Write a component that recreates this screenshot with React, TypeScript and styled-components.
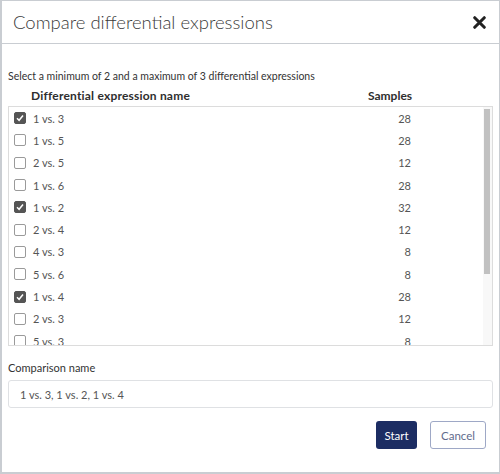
import React from "react";
import styled, { createGlobalStyle } from "styled-components";

const GlobalStyle = createGlobalStyle`
  html, body {
    margin: 0;
    padding: 0;
    background: #ffffff;
  }
  body {
    font-family: Lato, "Liberation Sans", sans-serif;
  }
`;

const expressions = [
  { name: "1 vs. 3", samples: 28, checked: true },
  { name: "1 vs. 5", samples: 28, checked: false },
  { name: "2 vs. 5", samples: 12, checked: false },
  { name: "1 vs. 6", samples: 28, checked: false },
  { name: "1 vs. 2", samples: 32, checked: true },
  { name: "2 vs. 4", samples: 12, checked: false },
  { name: "4 vs. 3", samples: 8, checked: false },
  { name: "5 vs. 6", samples: 8, checked: false },
  { name: "1 vs. 4", samples: 28, checked: true },
  { name: "2 vs. 3", samples: 12, checked: false },
  { name: "5 vs. 3", samples: 8, checked: false },
  { name: "6 vs. 2", samples: 12, checked: false },
  { name: "4 vs. 6", samples: 8, checked: false },
  { name: "3 vs. 6", samples: 12, checked: false },
  { name: "4 vs. 5", samples: 8, checked: false },
];

const App = () => {
  const [rows, setRows] = React.useState(expressions);

  const toggle = (index: number) => {
    setRows(rows.map((r, i) => (i === index ? { ...r, checked: !r.checked } : r)));
  };

  const comparison = rows
    .filter((r) => r.checked)
    .map((r) => r.name)
    .join(", ");

  return (
    <>
      <GlobalStyle />
      <Dialog>
        <Header>
          <Title>Compare differential expressions</Title>
          <CloseButton aria-label="Close">
            <svg width="13" height="13" viewBox="0 0 12 12">
              <path d="M1.6 1.6 L10.4 10.4 M10.4 1.6 L1.6 10.4" stroke="#222" strokeWidth="2.8" strokeLinecap="round" />
            </svg>
          </CloseButton>
        </Header>
        <Body>
          <Hint>Select a minimum of 2 and a maximum of 3 differential expressions</Hint>
          <HeadRow>
            <HeadCell>Differential expression name</HeadCell>
            <HeadCell $center>Samples</HeadCell>
          </HeadRow>
          <ListBox>
            <ListContent>
              {rows.map((row, i) => (
                <Row key={row.name} onClick={() => toggle(i)}>
                  <NameCell>
                    <Check $checked={row.checked}>
                      {row.checked && (
                        <svg width="8" height="8" viewBox="0 0 8 8">
                          <path d="M1 4.3 L3.1 6.3 L7 1.6" stroke="#fff" strokeWidth="1.5" fill="none" />
                        </svg>
                      )}
                    </Check>
                    {row.name}
                  </NameCell>
                  <SampleCell>{row.samples}</SampleCell>
                </Row>
              ))}
            </ListContent>
            <ScrollTrack>
              <ScrollThumb />
            </ScrollTrack>
          </ListBox>
          <Label>Comparison name</Label>
          <Input value={comparison} readOnly />
          <Actions>
            <StartButton>Start</StartButton>
            <CancelButton>Cancel</CancelButton>
          </Actions>
        </Body>
      </Dialog>
    </>
  );
};

const Dialog = styled.div`
  width: 500px;
  height: 474px;
  box-sizing: border-box;
  border: 1px solid #c9cdd2;
  border-left-width: 2px;
  border-bottom-width: 2px;
  background: #ffffff;
  display: flex;
  flex-direction: column;
`;

const Header = styled.div`
  height: 42px;
  border-bottom: 1px solid #c9cdd2;
  display: flex;
  align-items: center;
  justify-content: space-between;
  padding: 0 13px 0 11px;
`;

const Title = styled.h1`
  margin: 0;
  font-size: 18.5px;
  font-weight: 300;
  color: #3a3a3a;
`;

const CloseButton = styled.button`
  border: none;
  background: none;
  padding: 0;
  display: flex;
  cursor: pointer;
`;

const Body = styled.div`
  padding: 24px 6px 0 6px;
  display: flex;
  flex-direction: column;
`;

const Hint = styled.div`
  font-size: 10.5px;
  color: #333;
  height: 16px;
  line-height: 16px;
`;

const HeadRow = styled.div`
  display: grid;
  grid-template-columns: 1fr 100px;
  padding: 0 53px 0 23px;
  height: 22px;
  align-items: center;
`;

const HeadCell = styled.div<{ $center?: boolean }>`
  font-size: 12px;
  font-weight: 700;
  color: #2e2e2e;
  letter-spacing: ${(p) => (p.$center ? "0" : "0.2px")};
  text-align: ${(p) => (p.$center ? "center" : "left")};
`;

const ListBox = styled.div`
  height: 238px;
  border: 1px solid #dcdcdc;
  display: flex;
  overflow: hidden;
`;

const ListContent = styled.div`
  flex: 1;
  overflow: hidden;
`;

const ScrollTrack = styled.div`
  width: 9px;
  background: #f8f8f8;
  padding: 2px 2px 0 1px;
  box-sizing: border-box;
`;

const ScrollThumb = styled.div`
  height: 165px;
  background: #c1c1c1;
`;

const Row = styled.div`
  display: grid;
  grid-template-columns: 1fr 100px;
  height: 22.3px;
  align-items: center;
  padding: 0 35px 0 5px;
  cursor: pointer;
`;

const NameCell = styled.div`
  display: flex;
  align-items: center;
  gap: 7px;
  font-size: 11px;
  color: #555;
`;

const Check = styled.span<{ $checked: boolean }>`
  width: 12px;
  height: 12px;
  box-sizing: border-box;
  border-radius: 2px;
  border: 1px solid ${(p) => (p.$checked ? "#555" : "#9a9a9a")};
  background: ${(p) => (p.$checked ? "#555" : "#fff")};
  display: flex;
  align-items: center;
  justify-content: center;
`;

const SampleCell = styled.div`
  font-size: 11px;
  color: #555;
  text-align: right;
  padding-right: 37px;
`;

const Label = styled.div`
  margin-top: 14px;
  font-size: 11px;
  color: #333;
  height: 16px;
  line-height: 16px;
`;

const Input = styled.input`
  margin-top: 4px;
  height: 28px;
  box-sizing: border-box;
  border: 1px solid #dfe1e4;
  border-radius: 3px;
  padding: 0 11px;
  font-family: Lato, "Liberation Sans", sans-serif;
  font-size: 11px;
  color: #555;
  outline: none;
`;

const Actions = styled.div`
  display: flex;
  justify-content: flex-end;
  gap: 13px;
  padding: 13px 7px 0 0;
`;

const StartButton = styled.button`
  height: 28px;
  padding: 0 8px;
  min-width: 41px;
  border: none;
  border-radius: 3px;
  background: #1c2d63;
  color: #fff;
  font-family: Lato, "Liberation Sans", sans-serif;
  font-size: 11.5px;
  cursor: pointer;
`;

const CancelButton = styled.button`
  height: 28px;
  padding: 0 10px;
  border: 1px solid #9ea8c6;
  border-radius: 3px;
  background: #fff;
  color: #5f6b8c;
  font-family: Lato, "Liberation Sans", sans-serif;
  font-size: 11.5px;
  cursor: pointer;
`;

export default App;
